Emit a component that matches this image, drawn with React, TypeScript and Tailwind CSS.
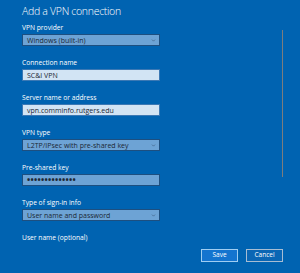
import { ChevronDown } from 'lucide-react'

type Field = { label: string; kind: 'select' | 'input' | 'password' | 'none'; value?: string }

const FIELDS: Field[] = [
  { label: 'VPN provider', kind: 'select', value: 'Windows (built-in)' },
  { label: 'Connection name', kind: 'input', value: 'SC&I VPN' },
  { label: 'Server name or address', kind: 'input', value: 'vpn.comminfo.rutgers.edu' },
  { label: 'VPN type', kind: 'select', value: 'L2TP/IPsec with pre-shared key' },
  { label: 'Pre-shared key', kind: 'password', value: '••••••••••••••' },
  { label: 'Type of sign-in info', kind: 'select', value: 'User name and password' },
  { label: 'User name (optional)', kind: 'none' },
]

const font = { fontFamily: '"Segoe UI", "Open Sans", "Noto Sans", sans-serif' }

function Box({ field }: { field: Field }) {
  if (field.kind === 'none') return null
  const tone =
    field.kind === 'input'
      ? 'bg-[#d2e4f4] border-[#3b78b4]'
      : 'bg-[#6da3d5] border-[#1d4f80]'
  return (
    <div className={`mt-[2px] h-[12px] w-[138px] border flex items-center pl-[4px] pr-[3px] ${tone}`}>
      <span
        className={`flex-1 leading-none text-[#1b2733] whitespace-nowrap ${
          field.kind === 'password' ? 'text-[8.5px] tracking-[0.3px] font-bold' : 'text-[7px]'
        }`}
      >
        {field.value}
      </span>
      {field.kind === 'select' && <ChevronDown className="w-[5px] h-[5px] text-[#3d5c7c]" strokeWidth={3} />}
    </div>
  )
}

export default function App() {
  return (
    <div className="w-[300px] h-[273px] bg-[#0063b1] relative overflow-hidden text-white" style={font}>
      <div className="pl-[22px] pt-[3px]">
        <h1 className="text-[10.5px] leading-[16px] font-light tracking-[-0.3px]">Add a VPN connection</h1>
        <div className="mt-[4px] flex flex-col gap-[12px]">
          {FIELDS.map((f) => (
            <div key={f.label}>
              <div className="h-[9px] leading-[9px] text-[6.7px] text-white whitespace-nowrap">{f.label}</div>
              <Box field={f} />
            </div>
          ))}
        </div>
      </div>

      <div className="absolute left-[201px] top-[249px] flex gap-[8px]">
        <button className="w-[37px] h-[13px] bg-[#1474cf] border-[1.5px] border-[#9fcdf2] text-[6.5px] leading-none text-white">
          Save
        </button>
        <button className="w-[37px] h-[13px] bg-[#0a66b4] border-[1.5px] border-[#a7bdd3] text-[6.5px] leading-none text-white">
          Cancel
        </button>
      </div>

      <div className="absolute left-[282px] top-[30px] h-[147px] w-px bg-[#7d7d7d]" />
    </div>
  )
}
